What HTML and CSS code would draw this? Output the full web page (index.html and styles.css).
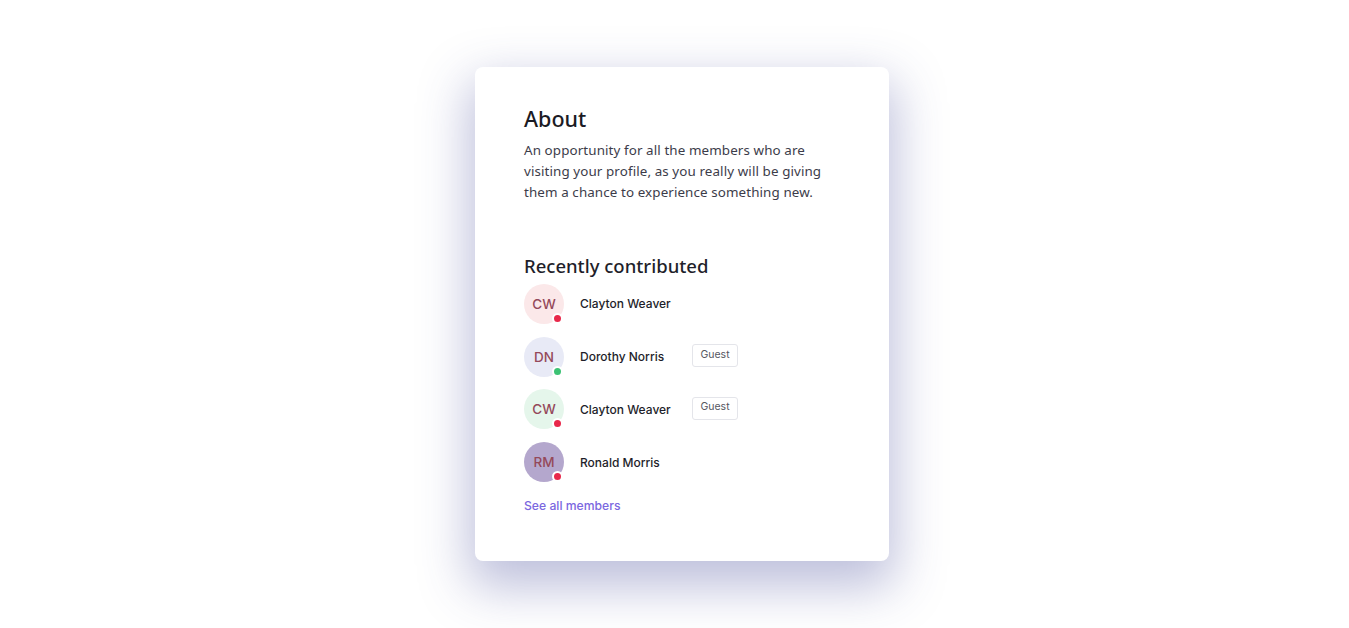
FILE: index.html
```html
<!DOCTYPE html>
<html lang="en">
<head>
<meta charset="utf-8">
<title>About</title>
<link rel="stylesheet" href="styles.css">
</head>
<body>
<main class="page">
  <section class="card">
    <h2 class="title">About</h2>
    <p class="desc">An opportunity for all the members who are visiting your profile, as you really will be giving them a chance to experience something new.</p>

    <h3 class="subtitle">Recently contributed</h3>
    <ul class="members">
      <li class="member">
        <span class="avatar av-pink">CW<i class="dot dot-red"></i></span>
        <span class="name">Clayton Weaver</span>
      </li>
      <li class="member">
        <span class="avatar av-blue">DN<i class="dot dot-green"></i></span>
        <span class="name">Dorothy Norris</span>
        <span class="badge">Guest</span>
      </li>
      <li class="member">
        <span class="avatar av-green">CW<i class="dot dot-red"></i></span>
        <span class="name">Clayton Weaver</span>
        <span class="badge">Guest</span>
      </li>
      <li class="member">
        <span class="avatar av-purple">RM<i class="dot dot-red"></i></span>
        <span class="name">Ronald Morris</span>
      </li>
    </ul>
    <a class="see-all" href="#">See all members</a>
  </section>
</main>
</body>
</html>
```

FILE: styles.css
```css
* { box-sizing: border-box; }
html, body { margin: 0; padding: 0; background: #ffffff; }
body {
  font-family: "Noto Sans", "Open Sans", sans-serif;
  color: #1f1f2b;
}
.page {
  min-height: 628px;
  display: flex;
  align-items: center;
  justify-content: center;
  padding-left: 15px;
}
.card {
  width: 414px;
  background: #fff;
  border-radius: 8px;
  padding: 38px 48px 45px 49px;
  box-shadow: 0 20px 50px 6px rgba(62, 68, 150, 0.34);
}
.title {
  margin: 0;
  font-size: 21.5px;
  line-height: 28px;
  font-weight: 500;
  color: #1b1b24;
}
.desc {
  margin: 7px 0 0;
  font-size: 13.4px;
  line-height: 21px;
  letter-spacing: 0.1px;
  color: #3c3c4a;
  width: 318px;
}
.subtitle {
  margin: 51px 0 0;
  font-size: 18.5px;
  line-height: 24px;
  font-weight: 500;
  color: #1f1f2b;
}
.members {
  list-style: none;
  margin: 6px 0 0;
  padding: 0;
  display: flex;
  flex-direction: column;
  gap: 12.7px;
}
.member {
  display: flex;
  align-items: center;
  height: 40px;
}
.avatar {
  position: relative;
  width: 40px;
  height: 40px;
  border-radius: 50%;
  display: flex;
  align-items: center;
  justify-content: center;
  font-family: "Inter", "Noto Sans", sans-serif;
  font-size: 13.5px;
  font-weight: 500;
  color: #94495a;
  flex: none;
}
.av-pink { background: #fbe8e9; }
.av-blue { background: #e8eaf6; }
.av-green { background: #e5f6eb; }
.av-purple { background: #b4a7cd; }
.dot {
  position: absolute;
  right: 1px;
  bottom: 0px;
  width: 11px;
  height: 11px;
  border-radius: 50%;
  border: 2px solid #fff;
}
.dot-red { background: #e8284a; }
.dot-green { background: #3cc274; }
.name {
  margin-left: 16px;
  width: 112px;
  font-family: "Inter", "Noto Sans", sans-serif;
  font-size: 12px;
  font-weight: 500;
  color: #1e1e2a;
}
.badge {
  display: inline-flex;
  align-items: center;
  justify-content: center;
  width: 46px;
  height: 23px;
  margin-bottom: 2px;
  border: 1px solid #e4e5ea;
  border-radius: 3px;
  font-family: "Inter", "Noto Sans", sans-serif;
  font-size: 10.5px;
  color: #55565f;
  padding-bottom: 3px;
}
.see-all {
  display: block;
  margin-top: 14px;
  font-family: "Inter", "Noto Sans", sans-serif;
  font-size: 12.2px;
  line-height: 20px;
  font-weight: 500;
  color: #7b67e0;
  text-decoration: none;
}
```
